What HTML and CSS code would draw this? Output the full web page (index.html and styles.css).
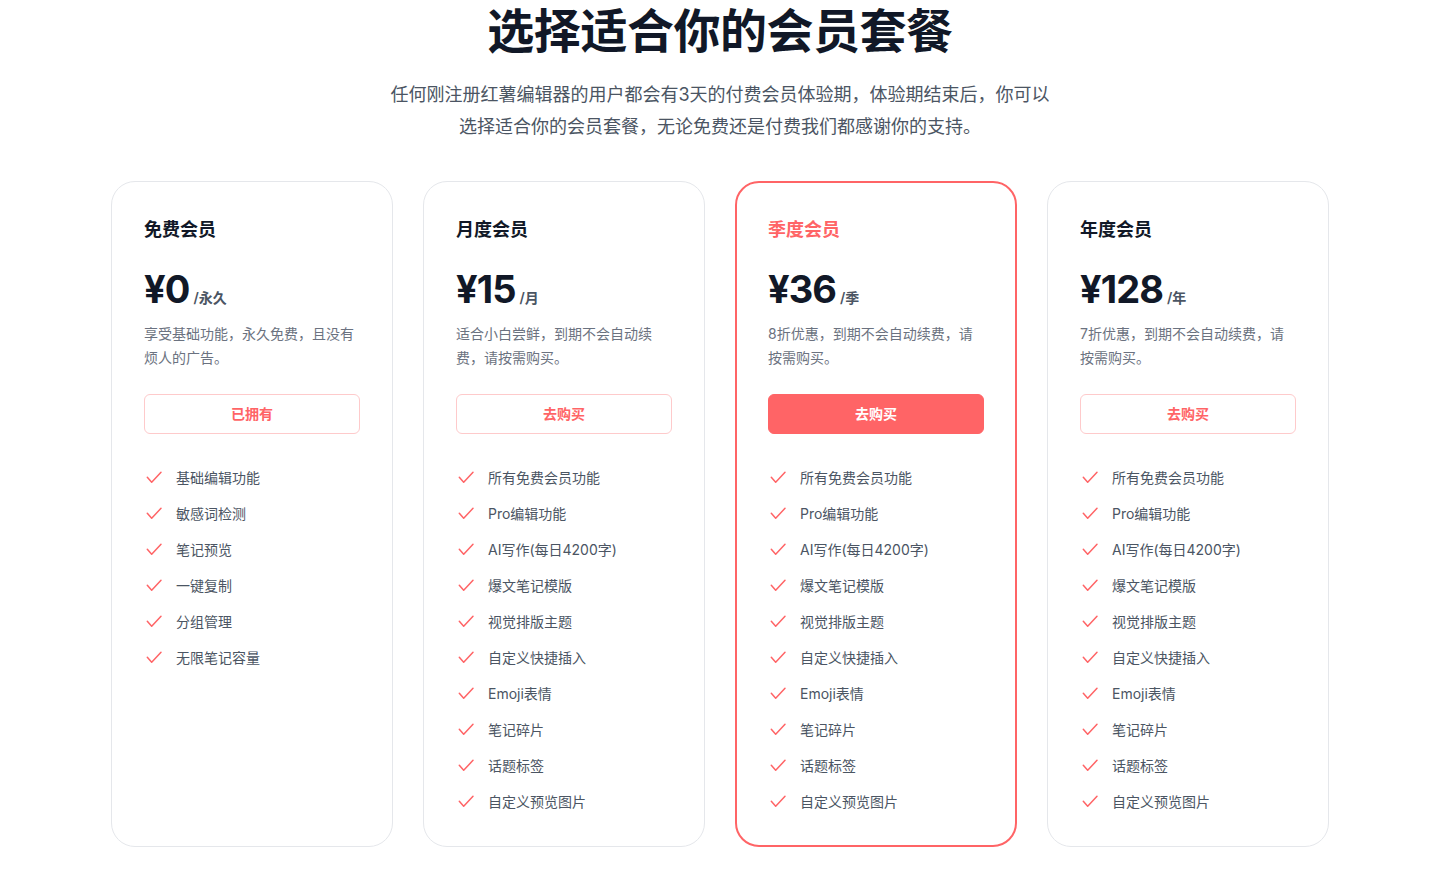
FILE: index.html
```html
<!DOCTYPE html>
<html lang="zh-CN">
<head>
<meta charset="utf-8">
<title>选择适合你的会员套餐</title>
<link rel="stylesheet" href="styles.css">
</head>
<body>
<div class="page">
  <header class="hero">
    <h1 class="hero-title">选择适合你的会员套餐</h1>
    <p class="hero-sub">任何刚注册红薯编辑器的用户都会有3天的付费会员体验期，体验期结束后，你可以选择适合你的会员套餐，无论免费还是付费我们都感谢你的支持。</p>
  </header>

  <section class="plans">
    <div class="plan">
      <h3 class="plan-name">免费会员</h3>
      <p class="plan-price"><span class="amount">¥0</span><span class="period">/永久</span></p>
      <p class="plan-desc">享受基础功能，永久免费，且没有烦人的广告。</p>
      <a class="plan-btn">已拥有</a>
      <ul class="features">
        <li><svg class="check" viewBox="0 0 20 20"><polyline points="3.3,9.3 7.7,14.3 17,4.3"/></svg>基础编辑功能</li>
        <li><svg class="check" viewBox="0 0 20 20"><polyline points="3.3,9.3 7.7,14.3 17,4.3"/></svg>敏感词检测</li>
        <li><svg class="check" viewBox="0 0 20 20"><polyline points="3.3,9.3 7.7,14.3 17,4.3"/></svg>笔记预览</li>
        <li><svg class="check" viewBox="0 0 20 20"><polyline points="3.3,9.3 7.7,14.3 17,4.3"/></svg>一键复制</li>
        <li><svg class="check" viewBox="0 0 20 20"><polyline points="3.3,9.3 7.7,14.3 17,4.3"/></svg>分组管理</li>
        <li><svg class="check" viewBox="0 0 20 20"><polyline points="3.3,9.3 7.7,14.3 17,4.3"/></svg>无限笔记容量</li>
      </ul>
    </div>

    <div class="plan">
      <h3 class="plan-name">月度会员</h3>
      <p class="plan-price"><span class="amount">¥15</span><span class="period">/月</span></p>
      <p class="plan-desc">适合小白尝鲜，到期不会自动续费，请按需购买。</p>
      <a class="plan-btn">去购买</a>
      <ul class="features">
        <li><svg class="check" viewBox="0 0 20 20"><polyline points="3.3,9.3 7.7,14.3 17,4.3"/></svg>所有免费会员功能</li>
        <li><svg class="check" viewBox="0 0 20 20"><polyline points="3.3,9.3 7.7,14.3 17,4.3"/></svg>Pro编辑功能</li>
        <li><svg class="check" viewBox="0 0 20 20"><polyline points="3.3,9.3 7.7,14.3 17,4.3"/></svg>AI写作(每日4200字)</li>
        <li><svg class="check" viewBox="0 0 20 20"><polyline points="3.3,9.3 7.7,14.3 17,4.3"/></svg>爆文笔记模版</li>
        <li><svg class="check" viewBox="0 0 20 20"><polyline points="3.3,9.3 7.7,14.3 17,4.3"/></svg>视觉排版主题</li>
        <li><svg class="check" viewBox="0 0 20 20"><polyline points="3.3,9.3 7.7,14.3 17,4.3"/></svg>自定义快捷插入</li>
        <li><svg class="check" viewBox="0 0 20 20"><polyline points="3.3,9.3 7.7,14.3 17,4.3"/></svg>Emoji表情</li>
        <li><svg class="check" viewBox="0 0 20 20"><polyline points="3.3,9.3 7.7,14.3 17,4.3"/></svg>笔记碎片</li>
        <li><svg class="check" viewBox="0 0 20 20"><polyline points="3.3,9.3 7.7,14.3 17,4.3"/></svg>话题标签</li>
        <li><svg class="check" viewBox="0 0 20 20"><polyline points="3.3,9.3 7.7,14.3 17,4.3"/></svg>自定义预览图片</li>
      </ul>
    </div>

    <div class="plan plan-featured">
      <h3 class="plan-name">季度会员</h3>
      <p class="plan-price"><span class="amount">¥36</span><span class="period">/季</span></p>
      <p class="plan-desc">8折优惠，到期不会自动续费，请按需购买。</p>
      <a class="plan-btn">去购买</a>
      <ul class="features">
        <li><svg class="check" viewBox="0 0 20 20"><polyline points="3.3,9.3 7.7,14.3 17,4.3"/></svg>所有免费会员功能</li>
        <li><svg class="check" viewBox="0 0 20 20"><polyline points="3.3,9.3 7.7,14.3 17,4.3"/></svg>Pro编辑功能</li>
        <li><svg class="check" viewBox="0 0 20 20"><polyline points="3.3,9.3 7.7,14.3 17,4.3"/></svg>AI写作(每日4200字)</li>
        <li><svg class="check" viewBox="0 0 20 20"><polyline points="3.3,9.3 7.7,14.3 17,4.3"/></svg>爆文笔记模版</li>
        <li><svg class="check" viewBox="0 0 20 20"><polyline points="3.3,9.3 7.7,14.3 17,4.3"/></svg>视觉排版主题</li>
        <li><svg class="check" viewBox="0 0 20 20"><polyline points="3.3,9.3 7.7,14.3 17,4.3"/></svg>自定义快捷插入</li>
        <li><svg class="check" viewBox="0 0 20 20"><polyline points="3.3,9.3 7.7,14.3 17,4.3"/></svg>Emoji表情</li>
        <li><svg class="check" viewBox="0 0 20 20"><polyline points="3.3,9.3 7.7,14.3 17,4.3"/></svg>笔记碎片</li>
        <li><svg class="check" viewBox="0 0 20 20"><polyline points="3.3,9.3 7.7,14.3 17,4.3"/></svg>话题标签</li>
        <li><svg class="check" viewBox="0 0 20 20"><polyline points="3.3,9.3 7.7,14.3 17,4.3"/></svg>自定义预览图片</li>
      </ul>
    </div>

    <div class="plan">
      <h3 class="plan-name">年度会员</h3>
      <p class="plan-price"><span class="amount">¥128</span><span class="period">/年</span></p>
      <p class="plan-desc">7折优惠，到期不会自动续费，请按需购买。</p>
      <a class="plan-btn">去购买</a>
      <ul class="features">
        <li><svg class="check" viewBox="0 0 20 20"><polyline points="3.3,9.3 7.7,14.3 17,4.3"/></svg>所有免费会员功能</li>
        <li><svg class="check" viewBox="0 0 20 20"><polyline points="3.3,9.3 7.7,14.3 17,4.3"/></svg>Pro编辑功能</li>
        <li><svg class="check" viewBox="0 0 20 20"><polyline points="3.3,9.3 7.7,14.3 17,4.3"/></svg>AI写作(每日4200字)</li>
        <li><svg class="check" viewBox="0 0 20 20"><polyline points="3.3,9.3 7.7,14.3 17,4.3"/></svg>爆文笔记模版</li>
        <li><svg class="check" viewBox="0 0 20 20"><polyline points="3.3,9.3 7.7,14.3 17,4.3"/></svg>视觉排版主题</li>
        <li><svg class="check" viewBox="0 0 20 20"><polyline points="3.3,9.3 7.7,14.3 17,4.3"/></svg>自定义快捷插入</li>
        <li><svg class="check" viewBox="0 0 20 20"><polyline points="3.3,9.3 7.7,14.3 17,4.3"/></svg>Emoji表情</li>
        <li><svg class="check" viewBox="0 0 20 20"><polyline points="3.3,9.3 7.7,14.3 17,4.3"/></svg>笔记碎片</li>
        <li><svg class="check" viewBox="0 0 20 20"><polyline points="3.3,9.3 7.7,14.3 17,4.3"/></svg>话题标签</li>
        <li><svg class="check" viewBox="0 0 20 20"><polyline points="3.3,9.3 7.7,14.3 17,4.3"/></svg>自定义预览图片</li>
      </ul>
    </div>
  </section>
</div>
</body>
</html>
```

FILE: styles.css
```css
* { box-sizing: border-box; }

html, body {
  margin: 0;
  padding: 0;
  background: #ffffff;
  overflow: hidden;
}

body {
  font-family: Inter, "Noto Sans CJK SC", "Noto Sans", sans-serif;
  color: #111827;
  -webkit-font-smoothing: antialiased;
}

.page {
  width: 1440px;
  padding-top: 7px;
}

.hero {
  text-align: center;
}

.hero-title {
  margin: 0;
  font-size: 47px;
  line-height: 1;
  font-weight: 700;
  color: #111827;
  letter-spacing: -0.01em;
}

.hero-sub {
  margin: 25px auto 0;
  max-width: 672px;
  font-size: 18px;
  line-height: 32px;
  color: #4b5563;
}

.plans {
  margin: 38px 0 0 111px;
  width: 1218px;
  display: grid;
  grid-template-columns: repeat(4, 1fr);
  column-gap: 30px;
}

.plan {
  border: 1px solid #e5e7eb;
  border-radius: 24px;
  padding: 32px;
  display: flex;
  flex-direction: column;
}

.plan-featured {
  border: 2px solid #ff6466;
  padding: 31px;
}

.plan-name {
  margin: 2px 0 0;
  font-size: 18px;
  line-height: 28px;
  font-weight: 700;
  color: #111827;
}

.plan-featured .plan-name {
  color: #ff6466;
}

.plan-price {
  margin: 25px 0 0;
  display: flex;
  align-items: baseline;
  column-gap: 4px;
}

.amount {
  font-size: 38px;
  line-height: 40px;
  font-weight: 700;
  letter-spacing: -0.025em;
  color: #111827;
}

.period {
  font-size: 14px;
  line-height: 24px;
  font-weight: 600;
  color: #4b5563;
}

.plan-desc {
  margin: 12px 0 0;
  font-size: 14px;
  line-height: 24px;
  color: #6b7280;
}

.plan-btn {
  margin-top: 24px;
  display: block;
  height: 40px;
  line-height: 38px;
  text-align: center;
  border: 1px solid #fecacb;
  border-radius: 6px;
  font-size: 14px;
  font-weight: 600;
  color: #ff6466;
}

.plan-featured .plan-btn {
  background: #ff6466;
  border-color: #ff6466;
  color: #ffffff;
}

.features {
  list-style: none;
  margin: 32px 0 0;
  padding: 0;
  display: flex;
  flex-direction: column;
  row-gap: 12px;
  font-size: 14px;
  line-height: 24px;
  color: #4b5563;
}

.features li {
  display: flex;
  align-items: center;
  column-gap: 12px;
}

.check {
  width: 20px;
  height: 20px;
  flex: none;
  fill: none;
  stroke: #ff6466;
  stroke-width: 1.5;
  stroke-linecap: round;
  stroke-linejoin: round;
}
```
